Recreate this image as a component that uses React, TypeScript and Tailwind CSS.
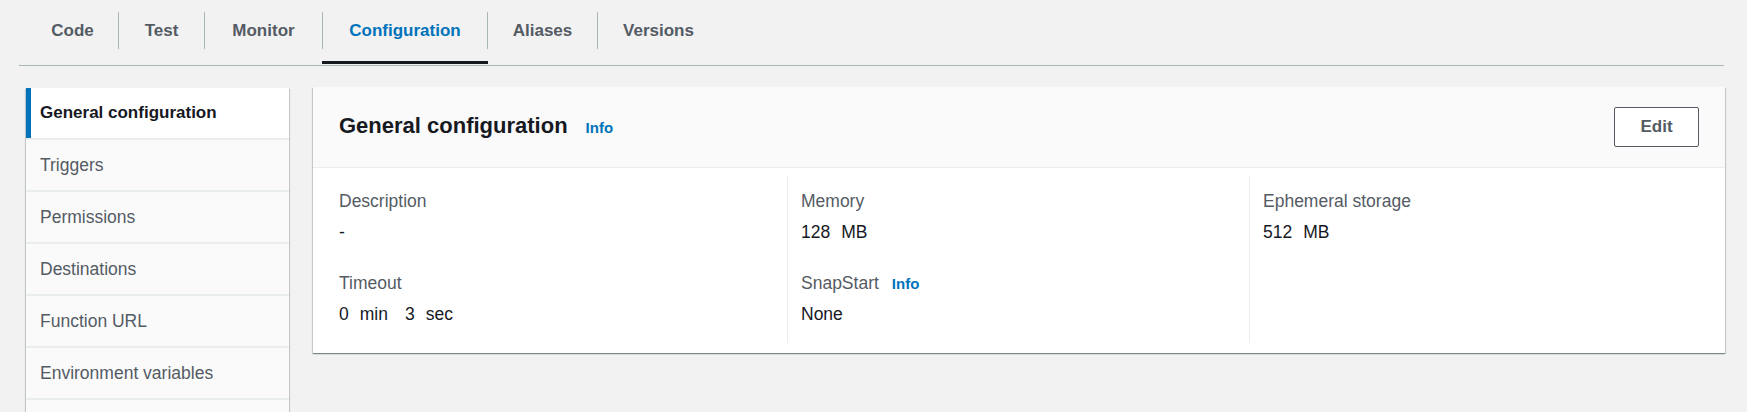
import React from "react";

const tabs = [
  { label: "Code", w: "w-[91px]" },
  { label: "Test", w: "w-[85px]" },
  { label: "Monitor", w: "w-[117px]" },
  { label: "Configuration", w: "w-[164px]", active: true },
  { label: "Aliases", w: "w-[109px]" },
  { label: "Versions", w: "w-[121px]" },
];

const navItems = [
  "General configuration",
  "Triggers",
  "Permissions",
  "Destinations",
  "Function URL",
  "Environment variables",
  "",
];

function Label({ children }: { children: React.ReactNode }) {
  return <div className="text-[17.5px] leading-[25px] text-[#545b64]">{children}</div>;
}

function Value({ children }: { children: React.ReactNode }) {
  return <div className="mt-[6px] text-[17.5px] leading-[25px] text-[#16191f]">{children}</div>;
}

function Info({ className = "" }: { className?: string }) {
  return (
    <a className={"text-[15px] font-bold text-[#0073bb] leading-[20px] " + className}>Info</a>
  );
}

export default function App() {
  return (
    <div className="h-[412px] bg-[#f2f2f2] font-['Liberation_Sans',Arial,sans-serif] overflow-hidden">
      {/* Tabs */}
      <div className="mx-[19px] mr-[23px] border-b border-[#aab7b8] flex pl-[8px]">
        {tabs.map((t, i) => (
          <React.Fragment key={t.label}>
            {i > 0 && <div className="w-px h-[37px] mt-[12px] bg-[#aab7b8]" />}
            <div className={"relative h-[65px] flex justify-center " + t.w}>
              <span
                className={
                  "mt-[19px] text-[17px] leading-[23px] font-bold " +
                  (t.active ? "text-[#0073bb]" : "text-[#545b64]")
                }
              >
                {t.label}
              </span>
              {t.active && (
                <div className="absolute left-[-1px] right-[-1px] bottom-[1px] h-[3px] bg-[#16191f]" />
              )}
            </div>
          </React.Fragment>
        ))}
      </div>

      {/* Main */}
      <div className="flex items-start pl-[26px] pr-[22px] pt-[21px] gap-[24px]">
        {/* Side nav */}
        <div className="w-[263px] shrink-0 mt-[1px] bg-[#fafafa] shadow-[0_1px_1px_0_rgba(0,28,36,0.3),1px_1px_1px_0_rgba(0,28,36,0.15),-1px_1px_1px_0_rgba(0,28,36,0.15)]">
          {navItems.map((item, i) => (
            <div
              key={i}
              className={
                "h-[52px] border-b-2 border-[#eaeded] flex items-center " +
                (i === 0 ? "bg-white" : "bg-[#fafafa]")
              }
            >
              {i === 0 ? (
                <>
                  <div className="w-[5px] h-full bg-[#0073bb]" />
                  <span className="pl-[9px] text-[17px] font-bold text-[#16191f]">{item}</span>
                </>
              ) : (
                <span className="pl-[14px] text-[17.5px] text-[#545b64]">{item}</span>
              )}
            </div>
          ))}
        </div>

        {/* Card */}
        <div className="flex-1 bg-white shadow-[0_1px_1px_0_rgba(0,28,36,0.3),1px_1px_1px_0_rgba(0,28,36,0.15),-1px_1px_1px_0_rgba(0,28,36,0.15)]">
          <div className="h-[81px] px-[26px] flex items-center justify-between bg-[#fafafa] border-b border-[#eaeded]">
            <div className="flex items-baseline gap-[18px] -mt-[3px]">
              <h2 className="text-[22px] leading-[30px] font-bold text-[#16191f]">General configuration</h2>
              <Info />
            </div>
            <button className="w-[85px] h-[40px] border border-[#545b64] rounded-[2px] bg-white text-[17px] font-bold text-[#545b64]">
              Edit
            </button>
          </div>
          <div className="grid grid-cols-[474px_462px_1fr] pt-[8px] pb-[10px]">
            <div className="pl-[26px] pt-[13px] pb-[16px]">
              <Label>Description</Label>
              <Value>-</Value>
              <div className="mt-[26px]">
                <Label>Timeout</Label>
                <Value>
                  <span className="inline-flex gap-[11px]">
                    <span>0</span>
                    <span>min</span>
                    <span className="ml-[6px]">3</span>
                    <span>sec</span>
                  </span>
                </Value>
              </div>
            </div>
            <div className="border-l border-[#eaeded] pl-[13px] pt-[13px] pb-[16px]">
              <Label>Memory</Label>
              <Value>
                <span className="inline-flex gap-[11px]">
                  <span>128</span>
                  <span>MB</span>
                </span>
              </Value>
              <div className="mt-[26px]">
                <div className="flex items-baseline gap-[13px]">
                  <Label>SnapStart</Label>
                  <Info />
                </div>
                <Value>None</Value>
              </div>
            </div>
            <div className="border-l border-[#eaeded] pl-[13px] pt-[13px] pb-[16px]">
              <Label>Ephemeral storage</Label>
              <Value>
                <span className="inline-flex gap-[11px]">
                  <span>512</span>
                  <span>MB</span>
                </span>
              </Value>
            </div>
          </div>
        </div>
      </div>
    </div>
  );
}
